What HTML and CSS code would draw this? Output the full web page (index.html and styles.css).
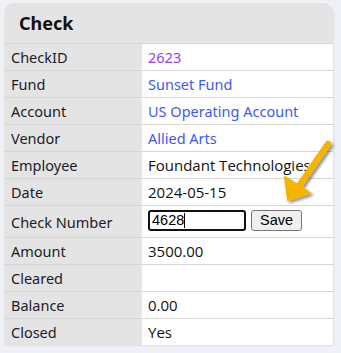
FILE: index.html
```html
<!DOCTYPE html>
<html>
<head>
<meta charset="utf-8">
<link rel="stylesheet" href="styles.css">
</head>
<body>
<div class="card">
  <div class="head">Check</div>
  <table class="grid">
    <tr><th>CheckID</th><td><a class="visited" href="#">2623</a></td></tr>
    <tr><th>Fund</th><td><a href="#">Sunset Fund</a></td></tr>
    <tr><th>Account</th><td><a href="#">US Operating Account</a></td></tr>
    <tr><th>Vendor</th><td><a href="#">Allied Arts</a></td></tr>
    <tr><th>Employee</th><td>Foundant Technologies</td></tr>
    <tr><th>Date</th><td>2024-05-15</td></tr>
    <tr class="edit"><th>Check Number</th><td><div class="editbox"><span class="input">4628<span class="caret"></span></span><span class="btn">Save</span></div></td></tr>
    <tr><th>Amount</th><td>3500.00</td></tr>
    <tr><th>Cleared</th><td></td></tr>
    <tr><th>Balance</th><td>0.00</td></tr>
    <tr><th>Closed</th><td>Yes</td></tr>
  </table>
</div>
<svg class="arrow" width="60" height="75" viewBox="0 0 60 75">
  <defs>
    <filter id="sh" x="-30%" y="-30%" width="160%" height="160%">
      <feGaussianBlur in="SourceAlpha" stdDeviation="1.5"/>
      <feOffset dx="1.5" dy="2" result="b"/>
      <feComponentTransfer><feFuncA type="linear" slope="0.45"/></feComponentTransfer>
      <feMerge><feMergeNode/><feMergeNode in="SourceGraphic"/></feMerge>
    </filter>
  </defs>
  <g filter="url(#sh)">
    <line x1="48" y1="7" x2="19" y2="49" stroke="#f5b400" stroke-width="6.5" stroke-linecap="round"/>
    <path d="M8 63 L5 40 L30 56 Z" fill="#f5b400" stroke="#f5b400" stroke-width="2" stroke-linejoin="round"/>
  </g>
</svg>
</body>
</html>
```
FILE: styles.css
```css
html, body {
  margin: 0;
  padding: 0;
}
body {
  background: #f0f1f6;
  padding: 3px 0 0 4px;
  width: 337px;
  height: 350px;
  position: relative;
  overflow: hidden;
}
.card {
  width: 329px;
  background: #e4e4e4;
  border-radius: 10px 10px 0 0;
  overflow: hidden;
  box-shadow: 1px 1px 2px rgba(0, 0, 0, 0.08);
}
.head {
  height: 40px;
  box-sizing: border-box;
  padding: 7px 0 0 15px;
  font-family: "Noto Sans", "Open Sans", sans-serif;
  font-weight: bold;
  font-size: 18px;
  line-height: 26px;
  color: #111;
}
.grid {
  width: 329px;
  border-collapse: collapse;
  table-layout: fixed;
}
.grid tr {
  border-top: 1px solid #d6d6d6;
}
.grid th,
.grid td {
  box-sizing: border-box;
  height: 26px;
  padding: 0;
  line-height: 26px;
  white-space: nowrap;
  overflow: hidden;
  vertical-align: middle;
}
.grid th {
  width: 138px;
  text-align: left;
  font-weight: normal;
  font-family: "Noto Sans", "Open Sans", sans-serif;
  font-size: 14.5px;
  color: #1b1b2b;
  padding-left: 7px;
  background: #e4e4e4;
}
.grid td {
  background: #fff;
  font-family: "Open Sans", sans-serif;
  font-size: 15px;
  color: #111;
  padding-left: 6px;
}
.grid a {
  color: #3d5af1;
  text-decoration: none;
  font-family: "Noto Sans", "Open Sans", sans-serif;
  font-size: 14.5px;
  line-height: 26px;
}
.grid a.visited {
  color: #8e3ff5;
}
.grid tr.edit th,
.grid tr.edit td {
  height: 32px;
}
.grid tr.edit td {
  padding-bottom: 3px;
}
.editbox {
  display: flex;
  gap: 5px;
  align-items: center;
  height: 21px;
}
.input {
  display: flex;
  align-items: center;
  box-sizing: border-box;
  width: 98px;
  height: 21px;
  border: 2px solid #111;
  border-radius: 3px;
  padding: 0 0 0 2px;
  font-family: "Liberation Sans", Arial, sans-serif;
  font-size: 14.5px;
  line-height: 17px;
  color: #000;
  background: #fff;
}
.caret {
  display: inline-block;
  width: 1px;
  height: 15px;
  background: #000;
}
.btn {
  box-sizing: border-box;
  width: 51px;
  height: 21px;
  border: 1px solid #767676;
  border-radius: 3px;
  background: #efefef;
  font-family: "Liberation Sans", Arial, sans-serif;
  font-size: 14.5px;
  line-height: 19px;
  text-align: center;
  color: #000;
}
.arrow {
  position: absolute;
  left: 280px;
  top: 137px;
}
```
